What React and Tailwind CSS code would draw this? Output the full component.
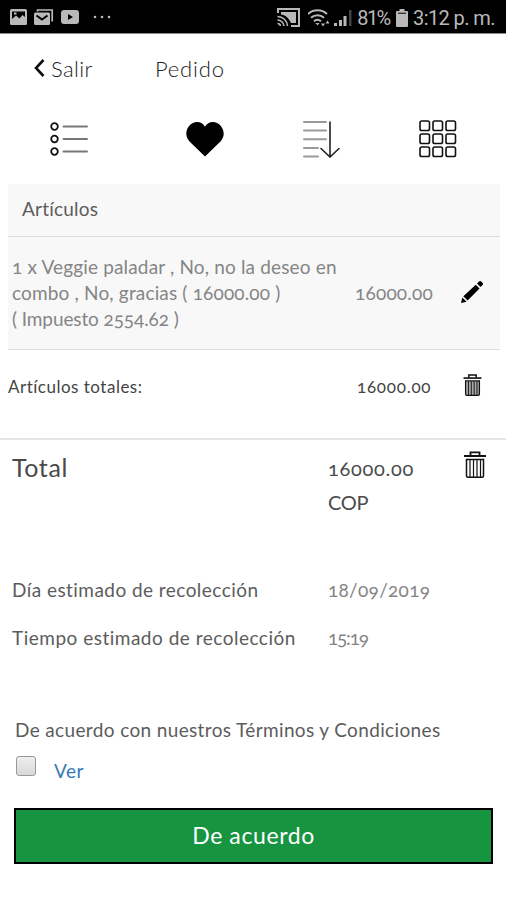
import { useState } from 'react';

function StatusBar() {
  return (
    <div className="flex h-[34px] items-center justify-between border-b border-[#8a8a8a] bg-black pr-[10px] pl-[10px] text-[#b9b9b9] lining-nums">
      <div className="flex items-center">
        <svg width="17" height="16" viewBox="0 0 17 16">
          <rect width="17" height="16" rx="1.5" fill="currentColor" />
          <path d="M2 10V2.500h13V8l-2.500-2L9.500 9.500 6 6.500z" fill="#000" />
          <rect x="4" y="3.500" width="2.500" height="2" fill="currentColor" />
        </svg>
        <svg className="ml-[7px]" width="20" height="16" viewBox="0 0 20 16">
          <path d="M3.500 2.500V1h14.700v11.500" fill="none" stroke="currentColor" strokeWidth="1.700" />
          <rect y="3.500" width="16" height="12.500" rx="1.500" fill="currentColor" />
          <path d="M2.500 6.500 8 10.500l5.500-4" fill="none" stroke="#000" strokeWidth="2" />
        </svg>
        <svg className="ml-[7px]" width="18" height="14" viewBox="0 0 18 14">
          <rect width="18" height="14" rx="3" fill="currentColor" />
          <path d="M7 4v6l5-3z" fill="#000" />
        </svg>
        <svg className="ml-[14px]" width="18" height="4" viewBox="0 0 18 4" fill="currentColor">
          <circle cx="2" cy="2" r="1.300" />
          <circle cx="9" cy="2" r="1.300" />
          <circle cx="16" cy="2" r="1.300" />
        </svg>
      </div>
      <div className="flex items-center pt-[2px] font-[Roboto,sans-serif] text-[20px]">
        <svg width="23" height="19" viewBox="0 0 23 19" fill="none" stroke="currentColor">
          <path d="M1 5V1h21v17h-8" strokeWidth="2" />
          <path d="M4 4h15v11h-5C12 10 8 7 4 6.500z" fill="currentColor" stroke="none" />
          <path d="M.5 8.500a10 10 0 0 1 10 9.500M.5 12a6.500 6.500 0 0 1 6.500 6M.5 15.500a3 3 0 0 1 3 2.500" strokeWidth="1.600" />
        </svg>
        <svg className="ml-[8px]" width="23" height="18" viewBox="0 0 23 18" fill="none" stroke="currentColor" strokeWidth="2">
          <path d="M0 5a14 14 0 0 1 19 0M3 8.700a9.500 9.500 0 0 1 13 0M6 12.300a5 5 0 0 1 7 0" />
          <path d="M7.500 14h4l-2 2.500z" fill="currentColor" stroke="none" />
          <path d="M13 14.500h4l-2 3zM17.500 14.500h4l-2-3z" fill="currentColor" stroke="none" />
        </svg>
        <svg className="ml-[3px]" width="18" height="16" viewBox="0 0 18 16" fill="currentColor">
          <rect y="13" width="3" height="3" />
          <rect x="5" y="10" width="3" height="6" />
          <rect x="9.500" y="6" width="3" height="10" />
          <rect x="15" width="2.500" height="16" fill="#444" />
        </svg>
        <span className="ml-[5px] w-[35px] tracking-[-1.700px] whitespace-nowrap">81%</span>
        <svg className="ml-[4px]" width="12" height="18" viewBox="0 0 12 18" fill="currentColor">
          <path d="M3.500 0h5v2H11a1 1 0 0 1 1 1v14a1 1 0 0 1-1 1H1a1 1 0 0 1-1-1V3a1 1 0 0 1 1-1h2.500z" />
          <path d="M2 4.200h8" stroke="#000" strokeWidth="1" />
        </svg>
        <span className="ml-[5px] w-[83px] tracking-[-0.6px] whitespace-nowrap">3:12 p. m.</span>
      </div>
    </div>
  );
}

function ListIcon() {
  return (
    <svg width="38" height="34" viewBox="0 0 38 34" fill="none">
      {[4.5, 17, 29.5].map((y) => (
        <g key={y}>
          <circle cx="4.500" cy={y} r="3.300" stroke="#111" strokeWidth="1.800" />
          <path d={`M13.500 ${y}h23.500`} stroke="#777" strokeWidth="2" strokeLinecap="round" />
        </g>
      ))}
    </svg>
  );
}

function HeartIcon() {
  return (
    <svg width="38" height="35" viewBox="0 0 38 35">
      <path d="M19 34.500 3.500 19.500C-4 11 3 0 11 0c3.500 0 6.500 1.700 8 4.700C20.500 1.700 23.500 0 27 0c8 0 15 11 7.500 19.500z" />
    </svg>
  );
}

function SortIcon() {
  return (
    <svg width="38" height="38" viewBox="0 0 38 38" fill="none" strokeLinecap="round">
      <path d="M1 2h22M1 10.500h22M1 19.200h22M1 28h14M1 36.500h14" stroke="#9a9a9a" strokeWidth="2" />
      <path d="M27 2v35M18 28.500l9 8.500 9-8.500" stroke="#222" strokeWidth="1.600" />
    </svg>
  );
}

function GridIcon() {
  return (
    <svg width="38" height="38" viewBox="0 0 38 38" fill="none" stroke="#111" strokeWidth="1.600">
      {[1, 14, 27].map((y) =>
        [1, 14, 27].map((x) => <rect key={`${x}-${y}`} x={x} y={y} width="9.500" height="9.500" rx="1.800" />)
      )}
    </svg>
  );
}

function PencilIcon() {
  return (
    <svg className="mb-[2px]" width="22" height="22" viewBox="0 0 22 22">
      <path d="M0 22l1.300-5.500 4.300 4.200zM2.300 15.300 14.800 3.700l3.700 3.700L6.600 19.600zM16 2.600l2-2c.7-.7 1.600-.7 2.300 0l1.200 1.200c.7.700.7 1.600 0 2.300l-2 2z" />
    </svg>
  );
}

function TrashIcon({ width, height, fill = '#fff' }) {
  return (
    <svg width={width} height={height} viewBox="0 0 22 27" fill="none" stroke="#111">
      <path d="M0 5h22" strokeWidth="2" />
      <path d="M6.500 4.500V1.300h9v3.200" strokeWidth="1.800" />
      <path d="M2.500 8.500h17v16.200a1.500 1.500 0 0 1-1.500 1.500H4a1.500 1.500 0 0 1-1.500-1.500z" fill={fill} strokeWidth="1.500" />
      <path d="M6 9v17M9.500 9v17M13 9v17M16.500 9v17" strokeWidth="1.200" />
    </svg>
  );
}

export default function App() {
  const [accepted, setAccepted] = useState(false);

  return (
    <div className="h-[900px] w-[506px] overflow-hidden bg-white font-[Lato,'Open_Sans',sans-serif] text-[#5c5c5c] oldstyle-nums">
      <StatusBar />

      <header className="flex h-[70px] items-center pb-[2px] pl-[34px] text-[22px] text-[#222]">
        <svg className="mr-[6px]" width="11" height="18" viewBox="0 0 11 18" fill="none">
          <path d="M9.500 1 2 9l7.500 8" stroke="#111" strokeWidth="2.600" />
        </svg>
        <a href="#" className="w-[104px] font-light tracking-[0.4px]">Salir</a>
        <span className="font-light tracking-[0.8px]">Pedido</span>
      </header>

      <nav className="flex h-[80px] items-start pt-[16px] pl-[50px]">
        <div className="flex h-[38px] w-[136px] items-center"><ListIcon /></div>
        <div className="flex h-[38px] w-[117px] items-center"><HeartIcon /></div>
        <div className="flex h-[38px] w-[116px] items-center"><SortIcon /></div>
        <div className="flex h-[38px] items-center"><GridIcon /></div>
      </nav>

      <section className="mr-[6px] ml-[8px] bg-[#f8f8f8]">
        <h2 className="flex h-[53px] items-center border-b border-[#ddd] pb-[2px] pl-[14px] text-[19px] tracking-[0.2px]">Artículos</h2>
        <div className="flex h-[113px] items-center border-b border-[#ddd] pl-[4px] text-[19px] text-[#858585]">
          <div className="w-[343px] leading-[26px] whitespace-nowrap">
            <p className="tracking-[0.160px]">1 x Veggie paladar , No, no la deseo en</p>
            <p className="tracking-[0.160px]">combo , No, gracias ( 16000.00 )</p>
            <p className="tracking-[-0.1px]">( Impuesto 2554.62 )</p>
          </div>
          <span className="w-[106px] tracking-[0.2px]">16000.00</span>
          <PencilIcon />
        </div>
      </section>

      <section className="flex h-[90px] border-b-2 border-[#e6e6e6] pt-[24px] pl-[8px] text-[17px] leading-[26px] text-[#444]">
        <span className="w-[349px] tracking-[0.5px]">Artículos totales:</span>
        <span className="w-[106px] tracking-[0.75px]">16000.00</span>
        <TrashIcon width={19} height={22} fill="#aaa" />
      </section>

      <section className="flex h-[126px] pt-[11px] pl-[12px] text-[#4a4a4a]">
        <span className="-mt-px w-[316px] text-[25px] leading-[34px] tracking-[0.6px]">Total</span>
        <div className="w-[136px] text-[20px] leading-[34px]">
          <p className="tracking-[0.7px]">16000.00</p>
          <p className="tracking-[-0.3px]">COP</p>
        </div>
        <TrashIcon width={22} height={27} />
      </section>

      <section className="pl-[12px] text-[19px]">
        <div className="flex h-[48px] items-center">
          <span className="w-[316px] tracking-[0.45px]">Día estimado de recolección</span>
          <span className="tracking-[0.3px] text-[#858585]">18/09/2019</span>
        </div>
        <div className="flex h-[48px] items-center">
          <span className="w-[316px] tracking-[0.5px]">Tiempo estimado de recolección</span>
          <span className="tracking-[-1.200px] text-[#858585]">15:19</span>
        </div>
      </section>

      <section className="mt-[55px] mr-[13px] ml-[14px]">
        <p className="h-[27px] pl-px text-[19px] leading-[26px] tracking-[0.36px] whitespace-nowrap">De acuerdo con nuestros Términos y Condiciones</p>
        <div className="flex h-[64px] pt-[12px]">
          <input
            type="checkbox"
            checked={accepted}
            onChange={(e) => setAccepted(e.target.checked)}
            className="ml-[2px] size-[20px] appearance-none rounded-[3px] border border-[#999] bg-linear-to-b from-[#eee] to-[#d9d9d9] checked:bg-[#169440]"
          />
          <a href="#" className="ml-[18px] text-[19px] leading-[30px] tracking-[0.5px] text-[#337ab7]">Ver</a>
        </div>
        <button className="block h-[56px] w-full border-2 border-black bg-[#169440] pb-[2px] text-[23px] tracking-[0.6px] text-white">De acuerdo</button>
      </section>
    </div>
  );
}
